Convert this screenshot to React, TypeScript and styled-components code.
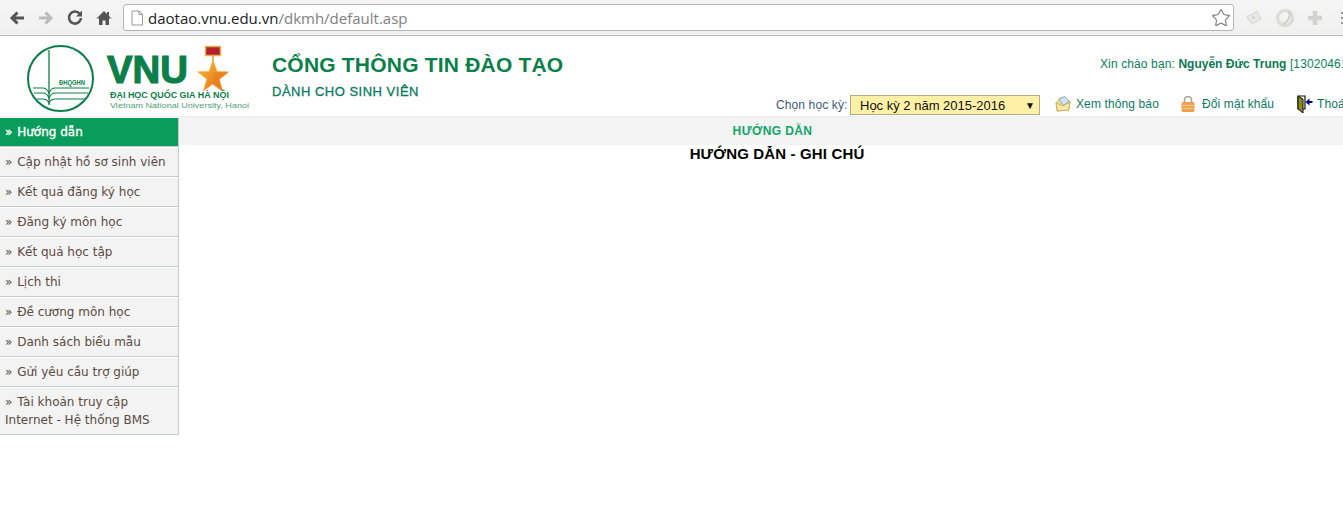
import React from 'react';
import styled, { createGlobalStyle } from 'styled-components';
import { Star } from 'lucide-react';

const GlobalStyle = createGlobalStyle`
    html, body {
        margin: 0;
        padding: 0;
        background: #fff;
        overflow: hidden;
    }
    body {
        font-family: 'Liberation Sans', Arial, sans-serif;
        font-size: 12px;
    }
`;

const menuItems = [
    'Cập nhật hồ sơ sinh viên',
    'Kết quả đăng ký học',
    'Đăng ký môn học',
    'Kết quả học tập',
    'Lịch thi',
    'Đề cương môn học',
    'Danh sách biểu mẫu',
    'Gửi yêu cầu trợ giúp',
    'Tài khoản truy cập Internet - Hệ thống BMS',
];

const Logo = () => (
    <svg width="272" height="76" viewBox="-42 0 272 76">
        <defs>
            <linearGradient id="star" x1="0" y1="0" x2="1" y2="1">
                <stop offset="0" stopColor="#f7b733" />
                <stop offset="1" stopColor="#e8691c" />
            </linearGradient>
        </defs>
        <circle cx="18.5" cy="41.5" r="32.5" fill="none" stroke="#0b7f49" strokeWidth="2" />
        <path d="M7 13v55" stroke="#0b7f49" strokeWidth="1.3" fill="none" />
        <g stroke="#0b7f49" strokeWidth="1.2" fill="none">
            <path d="M-9 51H1c4 0 5 3 6 5 1-2 2-5 6-5h34" />
            <path d="M-8 56H1c4 0 5 3 6 5 1-2 2-5 6-5h33" />
            <path d="M-5 62H1c4 0 5 2 6 4 1-2 2-4 6-4h30" />
        </g>
        <text x="17" y="48" fontSize="6.4" fontWeight="700" fill="#0b7f49" fontFamily="Liberation Sans" textLength="26" lengthAdjust="spacingAndGlyphs">
            ĐHQGHN
        </text>
        <text x="65" y="46" fontSize="39" fontWeight="700" fill="#0b7f49" stroke="#0b7f49" strokeWidth="1.2" fontFamily="Liberation Sans" textLength="81" lengthAdjust="spacingAndGlyphs">
            VNU
        </text>
        <rect x="163.5" y="9.5" width="15" height="9" fill="#b7202a" stroke="#e2b354" strokeWidth="1.5" />
        <path d="M171 18v6" stroke="#e2a13c" strokeWidth="1.5" />
        <path d="M171 23l4 11.5 11.5.3-9.2 7.2 3.3 12-9.6-6.9-9.6 6.9 3.3-12-9.2-7.2 11.5-.3z" fill="url(#star)" stroke="#f5b335" strokeWidth="0.6" />
        <path d="M171 23v25l9.6 6.9-3.3-12 9.2-7.2-15.5 0z" fill="#e97b1e" opacity="0.5" />
        <text x="68" y="61" fontSize="8.8" fontWeight="700" fill="#0b7f49" fontFamily="Liberation Sans" textLength="119" lengthAdjust="spacingAndGlyphs">
            ĐẠI HỌC QUỐC GIA HÀ NỘI
        </text>
        <text x="68" y="71" fontSize="8" fill="#4f9f78" fontFamily="Liberation Sans" textLength="139" lengthAdjust="spacingAndGlyphs">
            Vietnam National University, Hanoi
        </text>
    </svg>
);

const MailIcon = () => (
    <svg width="16" height="16" viewBox="0 0 16 16">
        <path d="M1 7l4-5 5-1 5 5-1 8-12 1z" fill="#f6dd87" stroke="#c9a74f" strokeWidth="0.8" />
        <path d="M4 3l6-2.5 4 5-6 4z" fill="#cfe3f5" stroke="#7fa3c7" strokeWidth="0.8" />
        <path d="M1 7l7 3 7-4-1.5 8-11 1z" fill="#fbe9a8" stroke="#c9a74f" strokeWidth="0.8" />
    </svg>
);

const LockIcon = () => (
    <svg width="14" height="16" viewBox="0 0 14 16">
        <path d="M3.5 7V4a3.5 3.5 0 0 1 7 0v3" fill="none" stroke="#a5a59d" strokeWidth="1.6" />
        <rect x="1" y="6.5" width="12" height="9" rx="1" fill="#f0a24c" stroke="#e6923a" strokeWidth="0.8" />
        <path d="M1.5 9.5h11M1.5 12.5h11" stroke="#f8c98a" strokeWidth="1" />
    </svg>
);

const ExitIcon = () => (
    <svg width="16" height="18" viewBox="0 0 16 18">
        <path d="M1 1h7v13H1z" fill="none" stroke="#111" strokeWidth="1.2" />
        <path d="M1 1l5 3v14l-5-4z" fill="#8a8a1c" stroke="#111" strokeWidth="1" />
        <path d="M15.5 6h-3V3.5L8.5 7l4 3.5V8h3z" fill="#000080" />
    </svg>
);

export default function App() {
    return (
        <>
            <GlobalStyle />
            <Browser>
                <NavIcon viewBox="0 0 18 18">
                    <path d="M16 9H5M9.5 3.5L4 9l5.5 5.5" fill="none" stroke="#555" strokeWidth="3" />
                </NavIcon>
                <NavIcon viewBox="0 0 18 18">
                    <path d="M2 9h11M8.5 3.5L14 9l-5.5 5.5" fill="none" stroke="#bbb" strokeWidth="3" />
                </NavIcon>
                <NavIcon viewBox="0 0 18 18">
                    <path d="M14 5.2A6 6 0 1 0 15 9" fill="none" stroke="#555" strokeWidth="2.6" />
                    <path d="M16 1.5v6h-6z" fill="#555" />
                </NavIcon>
                <NavIcon viewBox="0 0 18 18">
                    <path d="M9 2L1.5 9.5H4V16h3.5v-4.5h3V16H14V9.5h2.5L14 7V3h-2v2z" fill="#555" />
                </NavIcon>
                <AddressBar>
                    <PageIcon viewBox="0 0 14 16">
                        <path d="M2 1h7l3.5 3.5V15H2z M9 1v3.5h3.5" fill="#fff" stroke="#999" strokeWidth="1" />
                    </PageIcon>
                    <Url>
                        daotao.vnu.edu.vn<UrlPath>/dkmh/default.asp</UrlPath>
                    </Url>
                    <Star size={20} color="#777" strokeWidth={1.3} />
                </AddressBar>
                <Extensions>
                    <svg width="18" height="18" viewBox="0 0 18 18">
                        <path d="M2 8l10-6 4 8-9 5z" fill="#e8e8e4" stroke="#d5d5d0" />
                        <path d="M8 6l2 3-3 1z" fill="#cfcfca" />
                    </svg>
                    <svg width="20" height="20" viewBox="0 0 20 20">
                        <circle cx="10" cy="10" r="7.5" fill="none" stroke="#dcdcd8" strokeWidth="3.5" />
                        <path d="M14 3c2 5-1 11-6 13" fill="none" stroke="#cfcfca" strokeWidth="2" />
                    </svg>
                    <svg width="16" height="16" viewBox="0 0 16 16">
                        <path d="M8 1v14M1 8h14" stroke="#d2d2ce" strokeWidth="4.5" />
                    </svg>
                    <MenuDots />
                </Extensions>
            </Browser>
            <Header>
                <LogoCell>
                    <Logo />
                </LogoCell>
                <TitleCell>
                    <Title>CỔNG THÔNG TIN ĐÀO TẠO</Title>
                    <Subtitle>DÀNH CHO SINH VIÊN</Subtitle>
                </TitleCell>
                <UserCell>
                    <Greeting>
                        Xin chào bạn: <b>Nguyễn Đức Trung</b> [13020461]
                    </Greeting>
                    <Tools>
                        <SemesterLabel>Chọn học kỳ:</SemesterLabel>
                        <SemesterSelect>
                            Học kỳ 2 năm 2015-2016
                            <Caret>▼</Caret>
                        </SemesterSelect>
                        <ToolLink $width={126}>
                            <MailIcon />
                            Xem thông báo
                        </ToolLink>
                        <ToolLink $width={115} $gap={7}>
                            <LockIcon />
                            Đổi mật khẩu
                        </ToolLink>
                        <ToolLink $width={80} $gap={4} $indent={16}>
                            <ExitIcon />
                            Thoát
                        </ToolLink>
                    </Tools>
                </UserCell>
            </Header>
            <Body>
                <Sidebar>
                    <MenuItem $active>
                        <Chevron>»</Chevron> Hướng dẫn
                    </MenuItem>
                    {menuItems.map((item) => (
                        <MenuItem key={item}>
                            <Chevron>»</Chevron> {item}
                        </MenuItem>
                    ))}
                </Sidebar>
                <Main>
                    <MainBar>HƯỚNG DẪN</MainBar>
                    <MainTitle>HƯỚNG DẪN - GHI CHÚ</MainTitle>
                </Main>
            </Body>
        </>
    );
}

const Browser = styled.div`
    display: flex;
    align-items: center;
    height: 36px;
    box-sizing: border-box;
    padding: 0 0 0 8px;
    background: linear-gradient(#f5f5f5, #f0f0f0);
    border-bottom: 1px solid #bdbdbd;
`;

const NavIcon = styled.svg`
    width: 18px;
    height: 18px;
    margin-right: 11px;
    flex: none;
`;

const AddressBar = styled.div`
    display: flex;
    align-items: center;
    width: 1111px;
    height: 27px;
    box-sizing: border-box;
    margin-left: -1px;
    padding: 0 2px 0 6px;
    background: #fff;
    border: 1px solid #b5b5b5;
    border-radius: 3px;
`;

const PageIcon = styled.svg`
    width: 14px;
    height: 16px;
    flex: none;
`;

const Url = styled.div`
    flex: 1;
    margin-left: 4px;
    font-family: 'Open Sans', sans-serif;
    font-size: 15px;
    color: #222;
`;

const UrlPath = styled.span`
    color: #808080;
`;

const Extensions = styled.div`
    display: flex;
    align-items: center;
    gap: 12px;
    margin-left: 11px;
`;

const MenuDots = styled.span`
    width: 2px;
    height: 12px;
    margin-left: 6px;
    background: repeating-linear-gradient(#999 0 2px, transparent 2px 5px);
`;

const Header = styled.div`
    display: grid;
    grid-template-columns: 272px 504px 1fr;
    height: 80px;
    background: #fff;
    border-bottom: 1px solid #eee;
    overflow: hidden;
`;

const LogoCell = styled.div`
    padding-top: 1px;
`;

const TitleCell = styled.div`
    display: flex;
    flex-direction: column;
    padding-top: 15px;
`;

const Title = styled.div`
    font-size: 21px;
    font-weight: 700;
    line-height: 28px;
    letter-spacing: 0.2px;
    color: #0b7f49;
`;

const Subtitle = styled.div`
    margin-top: 5px;
    font-size: 13px;
    line-height: 16px;
    letter-spacing: 0.5px;
    -webkit-text-stroke: 0.3px #0b7a60;
    color: #0b7a60;
`;

const UserCell = styled.div`
    display: flex;
    flex-direction: column;
    color: #0b7a60;
    white-space: nowrap;
    letter-spacing: 0.12px;
`;

const Greeting = styled.div`
    padding-top: 21px;
    padding-left: 324px;
    line-height: 15px;
    color: #0b7f5a;

    b {
        color: #0b7a50;
        letter-spacing: 0;
    }
`;

const Tools = styled.div`
    display: flex;
    align-items: center;
    margin-top: 23px;
`;

const SemesterLabel = styled.span`
    width: 74px;
    color: #3b5b77;
`;

const SemesterSelect = styled.div`
    display: flex;
    align-items: center;
    justify-content: space-between;
    width: 190px;
    height: 20px;
    box-sizing: border-box;
    padding: 0 4px 0 9px;
    background: #fff0a8;
    border: 1px solid #b0a98a;
    color: #111;
    font-size: 13px;
    letter-spacing: 0;
`;

const Caret = styled.span`
    font-size: 10px;
`;

const ToolLink = styled.span<{ $width: number; $gap?: number; $indent?: number }>`
    display: flex;
    align-items: center;
    gap: ${(p) => p.$gap ?? 5}px;
    width: ${(p) => p.$width}px;
    flex: none;
    box-sizing: border-box;
    padding-left: ${(p) => p.$indent ?? 15}px;
    margin-top: -2px;
    color: #0b7a60;
`;

const Body = styled.div`
    display: flex;
`;

const Sidebar = styled.div`
    width: 179px;
    flex: none;
`;

const Chevron = styled.span`
    margin-right: 1px;
`;

const MenuItem = styled.div<{ $active?: boolean }>`
    box-sizing: border-box;
    min-height: 30px;
    padding: 5px 4px 5px 5px;
    font-family: 'DejaVu Sans', Verdana, sans-serif;
    font-size: 12px;
    line-height: 18px;
    background: ${(p) => (p.$active ? '#0a9c5b' : '#f3f3f3')};
    color: ${(p) => (p.$active ? '#fff' : '#5b4a3f')};
    -webkit-text-stroke: ${(p) => (p.$active ? '0.35px #fff' : '0')};
    border-right: 1px solid #c5cbcb;
    border-bottom: 1px solid #c5cbcb;
    border-top: 1px solid #fff;
`;

const Main = styled.div`
    flex: 1;
`;

const MainBar = styled.div`
    height: 28px;
    background: #f3f3f3;
    text-align: center;
    padding-left: 23px;
    line-height: 28px;
    font-size: 12px;
    font-weight: 700;
    letter-spacing: 0.4px;
    color: #10a668;
`;

const MainTitle = styled.div`
    text-align: center;
    padding-left: 32px;
    font-size: 15px;
    font-weight: 700;
    letter-spacing: 0.15px;
    line-height: 18px;
    color: #000;
`;
